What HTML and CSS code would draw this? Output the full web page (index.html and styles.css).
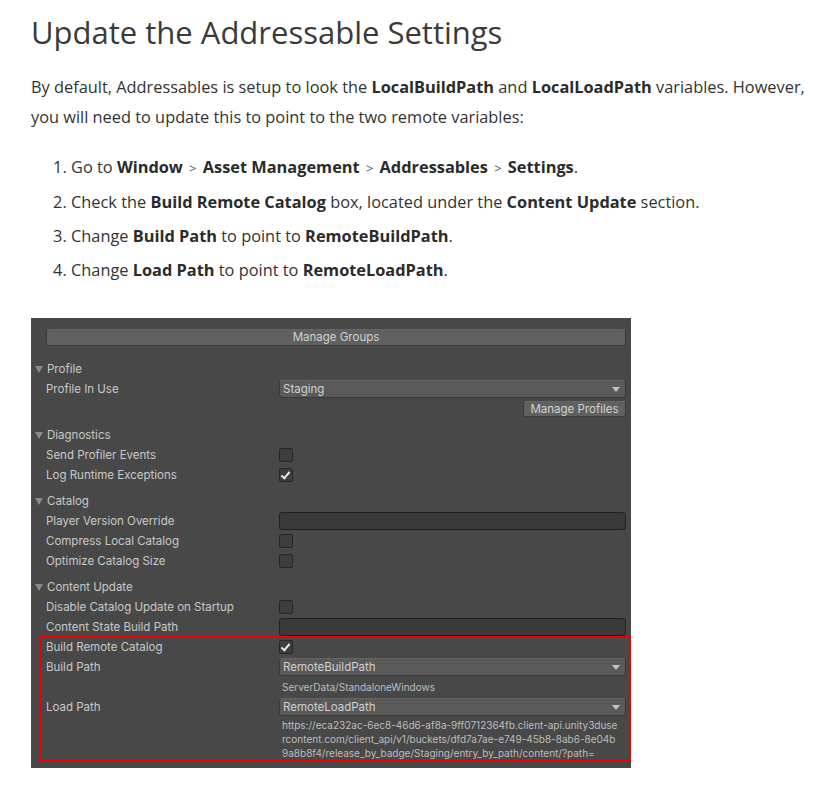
FILE: index.html
```html
<!DOCTYPE html>
<html>
<head>
<meta charset="utf-8">
<link rel="stylesheet" href="styles.css">
</head>
<body>
<main class="doc">
  <h2 class="title">Update the Addressable Settings</h2>
  <p class="lead">By default, Addressables is setup to look the <b>LocalBuildPath</b> and <b>LocalLoadPath</b> variables. However, you will need to update this to point to the two remote variables:</p>
  <ol class="steps">
    <li>Go to <b>Window</b> <span class="gt">&gt;</span> <b>Asset Management</b> <span class="gt">&gt;</span> <b>Addressables</b> <span class="gt">&gt;</span> <b>Settings</b>.</li>
    <li>Check the <b>Build Remote Catalog</b> box, located under the <b>Content Update</b> section.</li>
    <li>Change <b>Build Path</b> to point to <b>RemoteBuildPath</b>.</li>
    <li>Change <b>Load Path</b> to point to <b>RemoteLoadPath</b>.</li>
  </ol>

  <div class="panel">
    <div class="btn wide">Manage Groups</div>

    <div class="section">
      <div class="head"><span class="tri"></span>Profile</div>
      <div class="row"><span class="label">Profile In Use</span><div class="drop">Staging<span class="arrow"></span></div></div>
      <div class="row end"><div class="btn small">Manage Profiles</div></div>
    </div>

    <div class="section">
      <div class="head"><span class="tri"></span>Diagnostics</div>
      <div class="row"><span class="label">Send Profiler Events</span><span class="check"></span></div>
      <div class="row"><span class="label">Log Runtime Exceptions</span><span class="check on"></span></div>
    </div>

    <div class="section">
      <div class="head"><span class="tri"></span>Catalog</div>
      <div class="row"><span class="label">Player Version Override</span><div class="field"></div></div>
      <div class="row"><span class="label">Compress Local Catalog</span><span class="check"></span></div>
      <div class="row"><span class="label">Optimize Catalog Size</span><span class="check"></span></div>
    </div>

    <div class="section last">
      <div class="head"><span class="tri"></span>Content Update</div>
      <div class="row"><span class="label">Disable Catalog Update on Startup</span><span class="check"></span></div>
      <div class="row"><span class="label">Content State Build Path</span><div class="field"></div></div>
      <div class="highlight">
        <div class="row"><span class="label">Build Remote Catalog</span><span class="check on"></span></div>
        <div class="row"><span class="label">Build Path</span><div class="drop">RemoteBuildPath<span class="arrow"></span></div></div>
        <div class="row"><span class="label"></span><span class="note">ServerData/StandaloneWindows</span></div>
        <div class="row"><span class="label">Load Path</span><div class="drop">RemoteLoadPath<span class="arrow"></span></div></div>
        <div class="row tall"><span class="label"></span><span class="note url">https://eca232ac-6ec8-46d6-af8a-9ff0712364fb.client-api.unity3duse<br>rcontent.com/client_api/v1/buckets/dfd7a7ae-e749-45b8-8ab6-8e04b<br>9a8b8f4/release_by_badge/Staging/entry_by_path/content/?path=</span></div>
      </div>
    </div>
  </div>
</main>
</body>
</html>
```

FILE: styles.css
```css
* { box-sizing: border-box; }
html, body { margin: 0; padding: 0; background: #fff; }
body {
  font-family: "Open Sans", "Noto Sans", sans-serif;
  color: #333;
}
.doc {
  padding: 11px 0 0 31px;
  width: 837px;
}
.title {
  margin: 0;
  font-size: 31px;
  font-weight: 400;
  line-height: 42px;
  color: #3a3a3a;
}
.lead {
  margin: 19px 0 0;
  font-size: 16.35px;
  line-height: 30px;
}
.steps {
  margin: 23px 0 0;
  padding-left: 40px;
  font-size: 16.35px;
  line-height: 24px;
}
.steps li { margin-bottom: 10px; }
.gt { font-size: 13px; color: #555; padding: 0 2px; }
b { font-weight: 700; color: #2b2b2b; }

.panel {
  margin-top: 36px;
  width: 600px;
  background: #484848;
  padding: 11px 5px 8px 3px;
  font-family: Inter, "Noto Sans", sans-serif;
  font-size: 11.5px;
  color: #c8c8c8;
}
.btn {
  background: #606060;
  border-radius: 3px;
  border: 1px solid #3c3c3c;
  border-top-color: #656565;
  color: #d2d2d2;
  height: 17px;
  line-height: 15px;
  text-align: center;
}
.btn.wide { margin: 0 0 13px 12px; }
.btn.small { width: 103px; height: 16px; line-height: 14px; }
.section { margin-bottom: 6px; }
.section.last { margin-bottom: 0; }
.head {
  height: 20px;
  line-height: 20px;
  display: flex;
  align-items: center;
}
.tri {
  display: inline-block;
  width: 0;
  height: 0;
  border-left: 4px solid transparent;
  border-right: 4px solid transparent;
  border-top: 7px solid #8a8a8a;
  margin: 0 4px 0 1px;
}
.row {
  height: 20px;
  display: grid;
  grid-template-columns: 233px 1fr;
  align-items: center;
  padding-left: 12px;
}
.row.end { display: flex; justify-content: flex-end; }
.row.tall { height: 43px; align-items: start; }
.label { white-space: nowrap; }
.drop {
  position: relative;
  height: 18px;
  line-height: 17px;
  background: #5a5a5a;
  border: 1px solid #3a3a3a;
  border-top-color: #636363;
  border-radius: 3px;
  padding-left: 3px;
  color: #d0d0d0;
}
.arrow {
  position: absolute;
  right: 5px;
  top: 6px;
  border-left: 4px solid transparent;
  border-right: 4px solid transparent;
  border-top: 5px solid #c4c4c4;
}
.field {
  height: 18px;
  background: #3a3a3a;
  border: 1px solid #212121;
  border-radius: 3px;
}
.check {
  position: relative;
  width: 14px;
  height: 14px;
  background: #3e3e3e;
  border: 1px solid #262626;
  border-radius: 2px;
}
.check.on::after {
  content: "";
  position: absolute;
  left: 3px;
  top: 1px;
  width: 3px;
  height: 7px;
  border-right: 2px solid #e8e8e8;
  border-bottom: 2px solid #e8e8e8;
  transform: rotate(40deg);
}
.note {
  font-size: 10px;
  color: #bdbdbd;
  padding-left: 3px;
}
.url { line-height: 14px; padding-top: 1px; }
.highlight { position: relative; }
.highlight::after {
  content: "";
  position: absolute;
  left: 6px;
  right: -5px;
  top: -1px;
  bottom: -2px;
  border: 2px solid #e00;
  pointer-events: none;
}
```
